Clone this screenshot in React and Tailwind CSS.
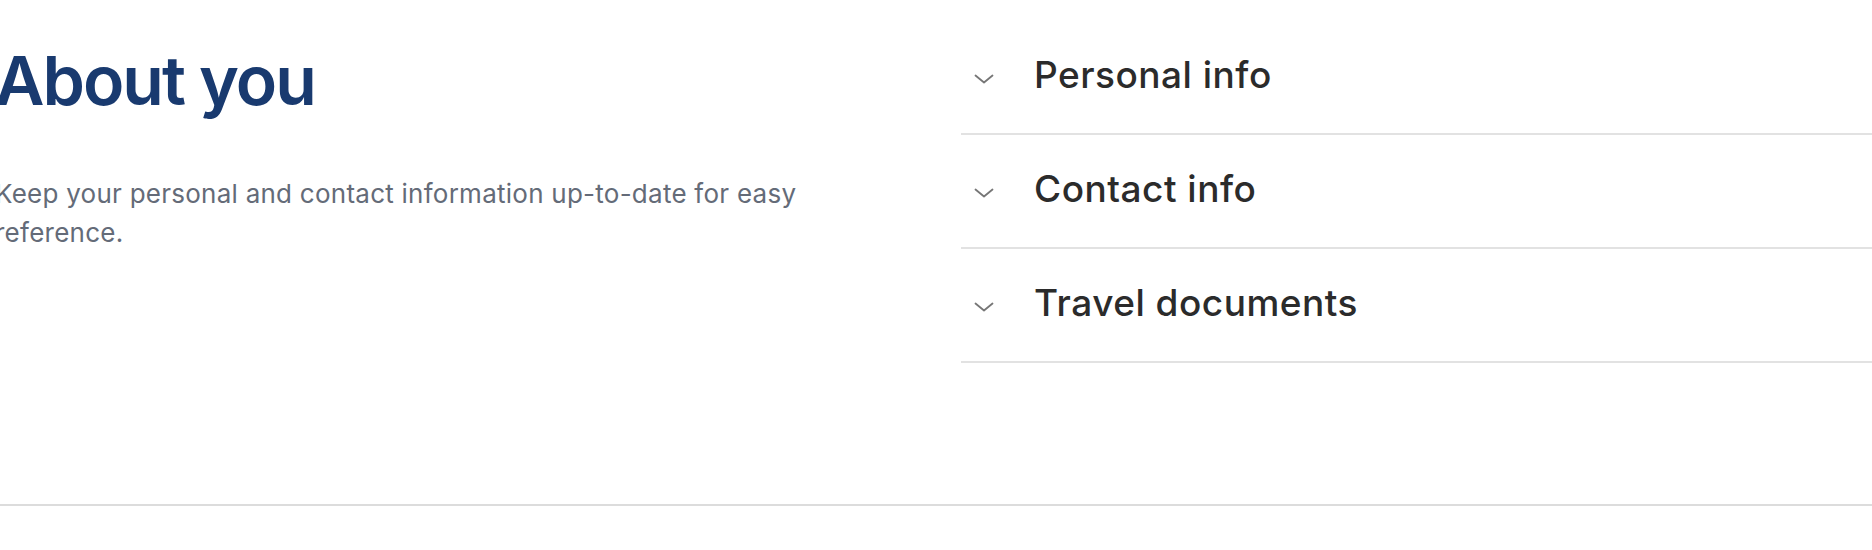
import React from "react";

const sections = ["Personal info", "Contact info", "Travel documents"];

function Chevron() {
  return (
    <svg
      width="20"
      height="10"
      viewBox="0 0 20 10"
      fill="none"
      className="mt-[4px] shrink-0">
      <polyline
        points="1.5,1.5 10,8.5 18.5,1.5"
        stroke="#767676"
        strokeWidth="1.8"
        strokeLinecap="round"
        strokeLinejoin="round"
      />
    </svg>
  );
}

export default function App() {
  return (
    <div
      className="w-full h-[550px] bg-white overflow-hidden"
      style={{ fontFamily: "Inter, 'Noto Sans', sans-serif" }}>
      <div className="flex h-[506px] border-b-2 border-[#dcdcdc]">
        {/* Left: title + description */}
        <div className="w-[966px] shrink-0 pt-[46px] -ml-[5px]">
          <h1 className="text-[68px] leading-none font-semibold tracking-[-2px] text-[#193a6f]">
            About you
          </h1>
          <p className="mt-[60px] w-[840px] text-[26px] leading-[39px] tracking-[0.25px] text-[#646b78]">
            Keep your personal and contact information up-to-date for easy
            reference.
          </p>
        </div>

        {/* Right: accordion list */}
        <div className="flex-1 pt-[21px]">
          {sections.map((label) => (
            <div
              key={label}
              className="flex items-center h-[114px] border-b-2 border-[#e2e2e2] pl-[13px] cursor-pointer">
              <Chevron />
              <span className="ml-[40px] mb-[6px] text-[37px] leading-none font-medium tracking-[0.5px] text-[#2b2b2b]">
                {label}
              </span>
            </div>
          ))}
        </div>
      </div>
    </div>
  );
}
